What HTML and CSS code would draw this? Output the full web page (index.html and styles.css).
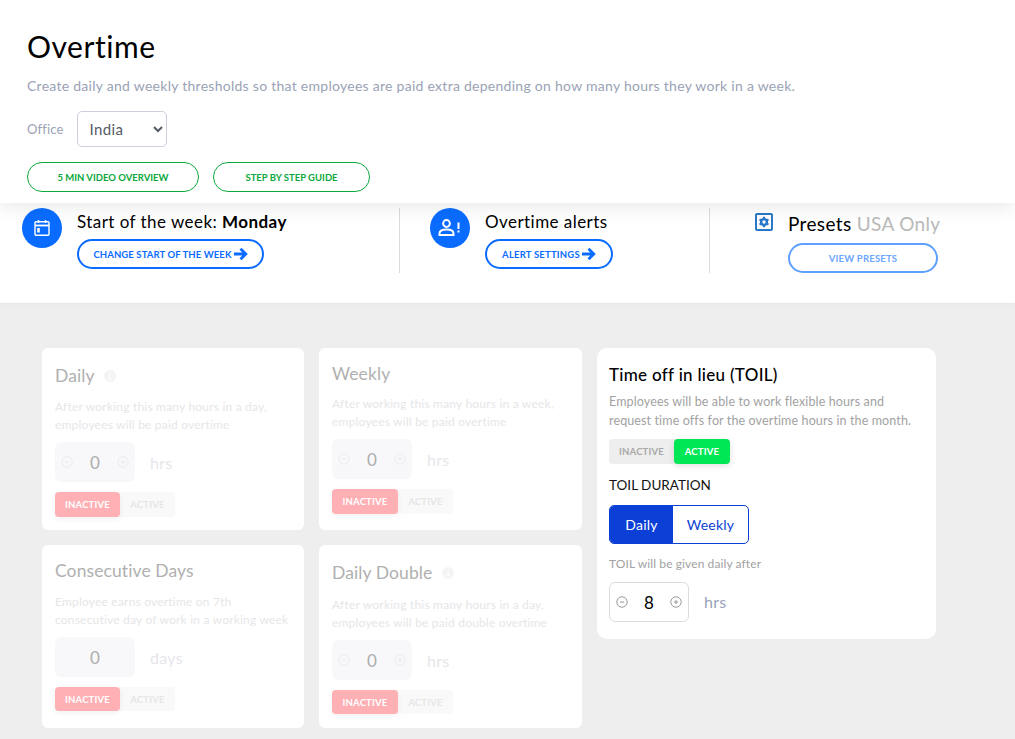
FILE: index.html
```html
<!DOCTYPE html>
<html lang="en">
<head>
    <meta charset="UTF-8">
    <title>Overtime</title>
    <link rel="stylesheet" href="styles.css">
</head>
<body>
    <svg class="sprites" width="0" height="0">
        <symbol id="minus" viewBox="0 0 12 12"><circle cx="6" cy="6" r="5.2" fill="none" stroke="currentColor"/><path d="M3.8 6h4.4" stroke="currentColor"/></symbol>
        <symbol id="plus" viewBox="0 0 12 12"><circle cx="6" cy="6" r="5.2" fill="none" stroke="currentColor"/><path d="M3.8 6h4.4M6 3.8v4.4" stroke="currentColor"/></symbol>
        <symbol id="info" viewBox="0 0 12 12"><circle cx="6" cy="6" r="6" fill="currentColor"/><path d="M6 2.4v1.5M5 5.3h1.2v3.5M4.8 8.9h2.6" stroke="#fff" fill="none"/></symbol>
        <symbol id="arrow" viewBox="0 0 14 14"><path d="M0 7h11M6.500 1.800L11.800 7l-5.300 5.200" fill="none" stroke="currentColor" stroke-width="2.800"/></symbol>
    </svg>

    <header class="top">
        <h1>Overtime</h1>
        <p class="intro">Create daily and weekly thresholds so that employees are paid extra depending on how many hours they work in a week.</p>
        <div class="office">
            <label for="office">Office</label>
            <select id="office"><option>India</option></select>
        </div>
        <div class="guides">
            <a class="guide guide-video">5 min video overview</a>
            <a class="guide guide-steps">Step by step guide</a>
        </div>
    </header>

    <section class="strip">
        <div class="strip-item strip-week">
            <span class="round-icon">
                <svg width="18" height="18" viewBox="0 0 18 18" fill="none" stroke="#fff" stroke-width="1.400"><rect x="2" y="2.700" width="14" height="13.600" rx="1"/><path d="M2 6.500h14" stroke-width="1.800"/><path d="M5.500 1v3M12.500 1v3"/><path d="M5.500 9v4.500" stroke-width="2.600"/></svg>
            </span>
            <div>
                <h2>Start of the week: <b>Monday</b></h2>
                <a class="pill pill-week">Change start of the week <svg class="arrow" width="14" height="14"><use href="#arrow"/></svg></a>
            </div>
        </div>
        <div class="strip-item strip-alerts">
            <span class="round-icon">
                <svg width="24" height="18" viewBox="0 0 24 18" fill="none" stroke="#fff" stroke-width="2"><circle cx="8.500" cy="4.500" r="3.400"/><path d="M1.500 16v-1.500c0-2.500 3-4 7-4s7 1.500 7 4V16z"/><path d="M20.500 3.500v6.500M20.500 11.500v2"/></svg>
            </span>
            <div>
                <h2>Overtime alerts</h2>
                <a class="pill pill-alerts">Alert settings <svg class="arrow" width="14" height="14"><use href="#arrow"/></svg></a>
            </div>
        </div>
        <div class="strip-presets">
            <svg class="gear" width="18" height="18" viewBox="0 0 18 18"><rect x="1" y="1" width="16" height="16" rx="1" fill="none" stroke="#2a78c8" stroke-width="2"/><circle cx="9" cy="9" r="2.900" fill="none" stroke="#2a78c8" stroke-width="2.400"/><path d="M9 3.800v2M9 12.200v2M4.500 6.400l1.700 1M11.800 10.600l1.700 1M4.500 11.600l1.700-1M11.800 7.400l1.700-1" stroke="#2a78c8" stroke-width="2.200"/></svg>
            <div>
                <h2 class="presets-title">Presets <span>USA Only</span></h2>
                <a class="pill pill-presets">View presets</a>
            </div>
        </div>
    </section>

    <main class="rules">
        <div class="rules-col">
            <div class="card off card-daily">
                <h3>Daily <svg class="info" width="12" height="12"><use href="#info"/></svg></h3>
                <p>After working this many hours in a day,<br>employees will be paid overtime</p>
                <div class="amount">
                    <span class="stepper"><svg width="12" height="12"><use href="#minus"/></svg><b>0</b><svg width="12" height="12"><use href="#plus"/></svg></span>
                    <span class="unit">hrs</span>
                </div>
                <div class="toggle"><span class="state on">Inactive</span><span class="state">Active</span></div>
            </div>
            <div class="card off card-consecutive">
                <h3>Consecutive Days</h3>
                <p>Employee earns overtime on 7th<br>consecutive day of work in a working week</p>
                <div class="amount">
                    <span class="stepper plain"><b>0</b></span>
                    <span class="unit">days</span>
                </div>
                <div class="toggle toggle-short"><span class="state on">Inactive</span><span class="state">Active</span></div>
            </div>
        </div>
        <div class="rules-col rules-col-wide">
            <div class="card off card-weekly">
                <h3>Weekly</h3>
                <p>After working this many hours in a week,<br>employees will be paid overtime</p>
                <div class="amount">
                    <span class="stepper"><svg width="12" height="12"><use href="#minus"/></svg><b>0</b><svg width="12" height="12"><use href="#plus"/></svg></span>
                    <span class="unit">hrs</span>
                </div>
                <div class="toggle"><span class="state on">Inactive</span><span class="state">Active</span></div>
            </div>
            <div class="card off card-double">
                <h3>Daily Double <svg class="info" width="12" height="12"><use href="#info"/></svg></h3>
                <p>After working this many hours in a day,<br>employees will be paid double overtime</p>
                <div class="amount">
                    <span class="stepper"><svg width="12" height="12"><use href="#minus"/></svg><b>0</b><svg width="12" height="12"><use href="#plus"/></svg></span>
                    <span class="unit">hrs</span>
                </div>
                <div class="toggle toggle-short"><span class="state on">Inactive</span><span class="state">Active</span></div>
            </div>
        </div>
        <div class="card toil">
            <h3>Time off in lieu (TOIL)</h3>
            <p>Employees will be able to work flexible hours and<br>request time offs for the overtime hours in the month.</p>
            <div class="toggle"><span class="state">Inactive</span><span class="state on">Active</span></div>
            <h4>TOIL DURATION</h4>
            <div class="segment"><span class="seg seg-on">Daily</span><span class="seg">Weekly</span></div>
            <small>TOIL will be given daily after</small>
            <div class="amount">
                <span class="stepper"><svg width="12" height="12"><use href="#minus"/></svg><b>8</b><svg width="12" height="12"><use href="#plus"/></svg></span>
                <span class="unit">hrs</span>
            </div>
        </div>
    </main>
</body>
</html>
```

FILE: styles.css
```css
* {
    box-sizing: border-box;
}
body {
    margin: 0;
    height: 739px;
    overflow: hidden;
    font-family: "Lato", "Liberation Sans", sans-serif;
    background-color: #eeeeee;
    color: #000;
}
h1, h2, h3, h4, p {
    margin: 0;
    font-weight: 400;
}
.sprites {
    display: block;
    height: 0;
}

/* header */
.top {
    position: relative;
    z-index: 2;
    height: 203px;
    padding: 28px 27px 0;
    background-color: #fff;
    box-shadow: 0 4px 18px rgba(0,0,0,0.09);
}
.top h1 {
    font-size: 30px;
    line-height: 36px;
    letter-spacing: 0.55px;
}
.intro {
    margin-top: 13px;
    font-size: 14px;
    line-height: 18px;
    letter-spacing: 0.27px;
    color: #9aa2b6;
}
.office {
    display: flex;
    align-items: center;
    gap: 14px;
    margin-top: 16px;
}
.office label {
    font-size: 13px;
    color: #9aa2b6;
    letter-spacing: 0.15px;
}
.office select {
    width: 90px;
    height: 36px;
    padding-left: 7px;
    border: 1px solid #cdd0dc;
    border-radius: 5px;
    background-color: #fff;
    font-family: inherit;
    font-size: 15px;
    letter-spacing: 0.4px;
    color: #555a66;
}
.guides {
    display: flex;
    gap: 14px;
    margin-top: 15px;
}
.guide {
    display: flex;
    align-items: center;
    justify-content: center;
    height: 30px;
    border: 1px solid #0aa83c;
    border-radius: 15px;
    font-size: 9.500px;
    font-weight: 700;
    text-transform: uppercase;
    color: #0aa83c;
}
.guide-video {
    width: 172px;
}
.guide-steps {
    width: 157px;
}

/* start of week / alerts / presets */
.strip {
    display: flex;
    height: 100px;
    padding: 5px 0 0 22px;
    background-color: #fff;
    box-shadow: 0 1px 2px rgba(0,0,0,0.04);
}
.strip-item {
    display: flex;
    gap: 15px;
    height: 65px;
    border-right: 1px solid #dcdcdc;
}
.strip-week {
    width: 378px;
}
.strip-alerts {
    width: 310px;
    padding-left: 30px;
}
.round-icon {
    display: flex;
    align-items: center;
    justify-content: center;
    width: 40px;
    height: 40px;
    border-radius: 50%;
    background-color: #0a6cff;
}
.strip h2 {
    font-size: 17px;
    line-height: 20px;
    margin-top: 4px;
    letter-spacing: 0.45px;
}
.strip h2 b {
    font-weight: 700;
}
.pill {
    display: inline-flex;
    align-items: center;
    justify-content: center;
    gap: 2px;
    height: 30px;
    margin-top: 7px;
    border: 2px solid #0a6cff;
    border-radius: 15px;
    font-size: 9.500px;
    font-weight: 700;
    letter-spacing: 0.2px;
    text-transform: uppercase;
    color: #0a6cff;
}
.pill-week {
    width: 187px;
    letter-spacing: 0.1px;
}
.pill-alerts {
    width: 128px;
}
.strip-presets {
    display: flex;
    gap: 15px;
    padding: 5px 0 0 45px;
}
.gear {
    margin-top: 0;
}
.strip .presets-title {
    margin-top: 0;
    font-size: 19px;
    line-height: 22px;
    letter-spacing: 0.35px;
}
.presets-title span {
    color: #b9b9b9;
}
.pill-presets {
    width: 150px;
    margin-top: 8px;
    border-color: #5ea0ff;
    color: #6ba6ff;
}

/* rule cards */
.rules {
    display: flex;
    align-items: flex-start;
    gap: 15px;
    padding: 45px 0 0 42px;
}
.rules-col {
    display: flex;
    flex-direction: column;
    gap: 15px;
}
.card {
    background-color: #fff;
    border-radius: 6px;
    padding: 0 12px;
}
.card h3 {
    font-size: 17.500px;
    line-height: 22px;
    letter-spacing: 0.1px;
}
.card p {
    font-size: 12px;
    line-height: 18px;
    letter-spacing: 0.2px;
}
.off {
    width: 262px;
    height: 182px;
    padding-left: 13px;
}
.off h3 {
    color: #b0b0b0;
}
.off p {
    color: #e6e6e8;
}
.off .amount {
    margin-top: 8px;
}
.card-daily {
    padding-top: 17px;
}
.card-daily p {
    margin-top: 11px;
}
.card-consecutive {
    height: 183px;
    padding-top: 15px;
}
.card-consecutive p {
    margin-top: 11px;
}
.card-weekly {
    width: 263px;
    padding-top: 15px;
}
.card-weekly p {
    margin-top: 10px;
}
.card-double {
    width: 263px;
    height: 183px;
    padding-top: 17px;
}
.card-double p {
    margin-top: 12px;
}
.info {
    margin-left: 5px;
    color: #f4f4f4;
}
.amount {
    display: flex;
    align-items: center;
    gap: 15px;
}
.stepper {
    display: flex;
    align-items: center;
    justify-content: space-between;
    width: 80px;
    height: 40px;
    padding: 0 6px;
    border-radius: 6px;
    background-color: #f8f8fa;
    color: #ebebed;
}
.stepper.plain {
    justify-content: center;
}
.stepper b {
    font-size: 17px;
    font-weight: 400;
    color: #adadad;
}
.unit {
    font-size: 16px;
    letter-spacing: 0.3px;
    color: #e6e6ea;
}
.toggle {
    display: inline-flex;
    height: 25px;
    margin-top: 10px;
    border-radius: 4px;
    background-color: #f9f9f9;
}
.toggle-short {
    height: 24px;
}
.state {
    display: flex;
    align-items: center;
    justify-content: center;
    width: 55px;
    border-radius: 4px;
    font-size: 9.500px;
    font-weight: 700;
    letter-spacing: 0.2px;
    text-transform: uppercase;
    color: #e6e6e6;
}
.state.on {
    width: 65px;
    background-color: #ffb0b5;
    color: #fff;
    box-shadow: 0 2px 6px rgba(0,0,0,0.06);
}
.rules-col-wide .state.on {
    width: 66px;
}

/* toil card */
.toil {
    width: 339px;
    height: 291px;
    padding-top: 16px;
    border-radius: 10px;
}
.toil h3 {
    font-size: 17px;
    font-weight: 500;
    letter-spacing: 0.3px;
}
.toil p {
    margin-top: 6px;
    font-size: 12.500px;
    line-height: 19px;
    letter-spacing: 0.12px;
    color: #a2a2a2;
}
.toil .toggle {
    margin-top: 9px;
    background-color: #eeeeee;
}
.toil .state {
    width: 65px;
    color: #a8a8a8;
}
.toil .state.on {
    width: 56px;
    background-color: #00e756;
    color: #fff;
    box-shadow: 0 2px 6px rgba(0,0,0,0.12);
}
.toil h4 {
    margin-top: 12px;
    font-size: 13.500px;
    line-height: 18px;
    color: #111;
}
.segment {
    display: flex;
    width: 140px;
    height: 39px;
    margin-top: 11px;
    border: 1px solid #0c3fd6;
    border-radius: 5px;
    overflow: hidden;
}
.seg {
    display: flex;
    align-items: center;
    justify-content: center;
    flex: 1;
    font-size: 14px;
    letter-spacing: 0.2px;
    color: #0c3fd6;
}
.seg-on {
    flex: none;
    width: 63px;
    background-color: #0c3fd6;
    color: #fff;
}
.toil small {
    display: block;
    margin-top: 12px;
    font-size: 12px;
    line-height: 16px;
    letter-spacing: 0.1px;
    color: #a2a2a2;
}
.toil .amount {
    margin-top: 10px;
}
.toil .stepper {
    border: 1px solid #dcdce0;
    background-color: #fff;
    color: #9a9a9a;
}
.toil .stepper b {
    color: #000;
}
.toil .unit {
    margin-top: -2px;
    color: #98a2ba;
}
```
